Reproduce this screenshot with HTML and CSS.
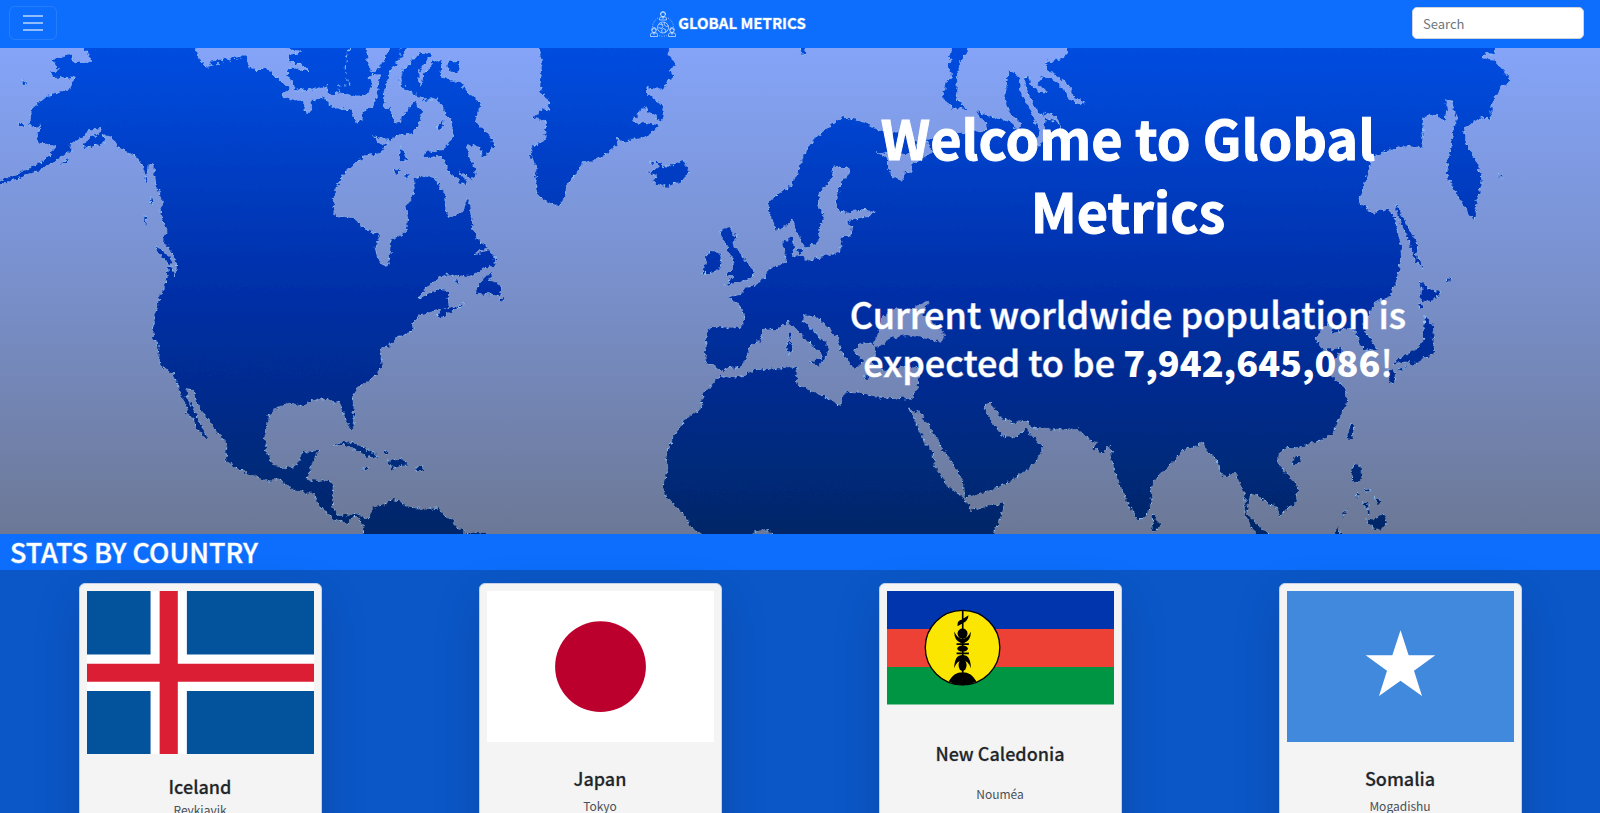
FILE: index.html
```html
<!DOCTYPE html>
<html lang="en">
<head>
<meta charset="utf-8">
<meta name="viewport" content="width=device-width, initial-scale=1">
<title>Global Metrics</title>
<link rel="stylesheet" href="styles.css">
</head>
<body>
<header class="navbar">
  <button class="toggler" type="button" aria-label="Toggle navigation">
    <svg viewBox="0 0 30 30" aria-hidden="true"><path d="M5 8h20M5 15h20M5 22h20"/></svg>
  </button>
  <a class="brand" href="#">
    <svg class="brand-logo" viewBox="0 0 52 52" aria-hidden="true">
      <circle cx="26" cy="33" r="11"/>
      <path d="M18 26l5 1 3 4-3 4-6-2M24 43l-1-5 4-3 5 3-2 5M29 23l-1 4 5 4 4-1M22 24l4 4"/>
      <path class="dots" d="M16 14A22 22 0 0 0 5 32M36 14a22 22 0 0 1 11 18M18 49q8 3 16 0"/>
      <circle cx="26" cy="7" r="4.500"/><path d="M19 18v-3q0-4 7-4t7 4v3zM21 8V5q1-4 5-4t5 4v3M24 12l2 3 2-3"/>
      <circle cx="8" cy="39" r="4"/><path d="M1 51v-4q0-4 7-4t7 4v4zM3 39q0-6 5-6t5 6M6 44l2 3 2-3"/>
      <circle cx="44" cy="39" r="4"/><path d="M37 51v-4q0-4 7-4t7 4v4zM39 39q0-6 5-6t5 6M42 44l2 3 2-3"/>
    </svg>
    <span>GLOBAL METRICS</span>
  </a>
  <form class="search" role="search"><input type="search" placeholder="Search" aria-label="Search"></form>
</header>

<main>
<section class="hero">
  <svg class="map" viewBox="0 48 1600 486" preserveAspectRatio="none" aria-hidden="true">
    <defs>
      <linearGradient id="land" gradientUnits="userSpaceOnUse" x1="0" y1="48" x2="0" y2="534">
        <stop offset="0" stop-color="#004de0"/><stop offset=".5" stop-color="#002fa8"/><stop offset="1" stop-color="#002768"/>
      </linearGradient>
      <linearGradient id="sea" gradientUnits="userSpaceOnUse" x1="0" y1="48" x2="0" y2="534">
        <stop offset="0" stop-color="#85a4f8"/><stop offset=".5" stop-color="#788fca"/><stop offset="1" stop-color="#6c7896"/>
      </linearGradient>
      <filter id="coast" filterUnits="userSpaceOnUse" x="-20" y="28" width="1640" height="526">
        <feTurbulence type="fractalNoise" baseFrequency=".22" numOctaves="2" seed="4"/>
        <feDisplacementMap in="SourceGraphic" scale="6" xChannelSelector="R" yChannelSelector="G"/>
      </filter>
    </defs>
    <rect y="48" width="1600" height="486" fill="url(#sea)"/>
    <g class="land" fill="url(#land)" filter="url(#coast)">
      <!-- Americas -->
      <path d="M86 40V50L90 57 91 61 78 63 72 60 72 54 65 55 52 60 56 65 59 70 50 73 54 78 75 77 69 90 47 96 40 101 32 108 31 116 29 125 37 129 42 123 37 137 37 142 56 146 50 155 40 163 20 173-5 183V186L20 178 37 171 50 164 63 156 72 150 70 145 82 137 92 129 102 128 100 133 90 137 83 145 85 148 97 144 100 146 105 143 103 134 112 137 117 145 128 152 137 157 143 167 146 176 149 165 153 163 155 177 158 190 163 203 160 210 163 222 168 230 163 240 170 249 176 260 177 270 174 276 172 268 167 267 167 281 165 286 160 297 156 310 154 323 153 338 158 345 159 360 163 368 173 373 177 383 182 398 188 408 185 413 193 418 197 428 205 439 207 437 200 423 193 408 188 400 186 388 193 390 198 405 210 422 217 432 227 443 226 460 240 470 260 478 268 481 280 479 293 490 313 493 323 510 335 520 347 523 353 516 358 517 363 524 364 542H485V534L465 532 458 527 445 515 437 508 423 510 407 506 400 502 393 499 383 505 373 508 367 520 358 513 348 515 338 515 332 507 334 485 328 481 307 480 310 470 315 457 319 451 303 452 299 462 295 467 282 468 272 463 265 448 266 430 269 415 277 408 287 403 305 406 312 399 328 399 333 403 339 402 343 410 347 423 351 429 354 425 354 413 352 395 357 388 370 380 382 368 380 348 388 347 397 337 413 332 413 322 420 315 437 310 448 308 448 293 442 289 435 291 417 298 427 287 443 275 473 276 483 268 495 266 495 257 488 250 475 255 477 252 488 247 478 240 473 230 470 210 468 198 463 212 450 217 445 208 445 192 439 187 435 178 420 176 415 178 413 197 405 207 408 217 407 230 398 237 391 240 389 266 382 266 375 252 379 235 367 230 353 218 335 216 333 202 335 190 343 175 355 163 367 155 380 153 388 143 380 144 372 135 383 139 391 141 398 134 407 135 417 130 422 112 414 101 402 117 400 122 393 124 390 107 385 110 384 97 387 80 392 68 400 58V40H392L388 52 378 70 370 72 367 56 366 40 355 40 346 58 344 70 350 84 338 86 340 92 357 97 367 94 373 84 369 78 373 73 380 74 378 90 377 97 373 106 362 112 362 120 357 122 350 110 333 108 325 98 312 100 310 111 306 115 303 102 290 100 282 95 290 88 277 78 268 69 257 70 249 67 247 55 213 62 208 68 200 60 195 48V40Z"/>
      <path d="M288 40V48L303 52 289 55 289 62 302 64 311 72 290 68 286 75 290 80 294 82 294 90 308 90 322 88 327 86 328 95 340 92 338 86 350 86 345 70 347 55 355 40Z"/>
      <path d="M157 246L162 250 170 258 172 266 166 262 158 252ZM143 178L147 176 147 182ZM150 198L153 200 151 205ZM144 215L147 216 145 227ZM58 165L70 157 66 163ZM20 79L26 81 27 86ZM18 123L24 123 23 126ZM209 62L243 55 246 57 212 65Z"/>
      <path d="M400 40H413L400 60ZM420 53L432 53 425 63 418 73 420 87 425 72 433 62 443 60 440 75 448 80 460 82 468 93 480 103 475 122 488 135 495 145 483 158 480 147 467 145 470 157 476 170 472 180 458 170 468 184 461 183 450 173 442 157 423 157 425 152 443 150 453 137 453 123 445 113 438 98 425 100 412 93 400 85 402 72 410 62ZM447 60L460 63 460 72 448 72ZM436 127L443 121 444 127 438 130ZM392 171L400 168 398 173ZM404 176L409 175 406 180ZM400 146L408 160 400 160Z"/>
      <path d="M539 40V48L542 63 540 90 548 100 550 112 543 108 534 118 547 122 545 140 532 147 530 157 538 167 535 173 538 195 545 200 558 207 565 197 567 183 577 173 582 163 600 158 617 145 618 138 622 142 645 137 660 125 633 122 643 107 660 121 664 119 662 105 647 93 647 87 663 90 667 80 675 77 668 70 677 65 668 55 671 40Z"/>
      <path d="M648 162L658 164 658 168 648 173 657 175 653 182 668 187 683 180 690 172 684 161 672 164 663 168 661 162ZM475 293L483 278 492 272 490 280 500 285 500 296 488 294ZM499 298L504 298 502 302ZM437 315L443 309 453 307 467 303 450 312 440 319ZM453 279L462 284 456 283ZM333 445L347 441 360 446 380 457 368 457 357 450 345 445ZM388 460L400 459 409 465 400 466 392 469ZM362 468L369 468 366 471ZM416 467H424V470H416ZM385 451H388V454H385Z"/>
      <!-- Eurasia and Africa -->
      <path d="M1067 40V50L1065 57 1045 63 1047 70 1056 75 1068 84 1075 98 1086 103 1078 104 1068 98 1063 88 1053 80 1041 76 1037 84 1048 92 1040 92 1031 86 1030 76 1024 78 1028 92 1034 105 1040 115 1048 113 1057 116 1062 128 1055 121 1045 119 1044 140 1039 147 1035 141 1040 134 1034 118 1027 105 1020 92 1020 79 1010 70 1007 78 1007 85 1005 100 1010 112 1021 123 1018 129 1008 121 990 117 976 111 979 117 988 124 983 132 972 131 960 133 945 130 935 138 926 140 932 152 922 158 912 163 912 173 905 172 902 180 893 177 888 168 888 158 877 153 890 153 905 154 919 149 912 139 897 133 878 130 865 123 853 119 843 117 825 130 813 140 802 158 800 167 792 185 777 195 768 203 772 220 777 230 785 227 792 218 797 232 805 248 818 242 820 227 825 217 818 207 820 192 833 177 833 167 848 167 850 173 842 183 837 195 837 210 847 213 862 209 875 212 868 217 847 220 852 227 851 236 842 236 840 253 828 255 810 261 800 256 791 257 794 247 792 237 783 243 787 262 767 270 766 276 756 285 745 288 740 295 728 297 738 303 745 315 742 328 712 327 707 330 705 355 707 365 713 365 721 371 727 368 740 367 747 358 748 348 762 338 762 330 777 329 788 322 800 333 810 343 820 352 823 362 829 350 826 343 817 335 803 322 804 314 817 317 838 338 840 350 848 361 855 370 863 362 854 350 860 343 872 343 876 352 872 364 885 370 900 366 920 368 920 377 917 388 912 399 880 398 858 392 845 393 840 406 822 395 800 387 796 380 797 367 753 370 742 377 720 377 703 393 702 407 683 423 675 435 666 453 668 470 663 485 667 498 683 513 688 523 702 535 702 542H745L753 532 765 529 774 535 774 542H993V534L1002 513 1004 503 972 510 964 498 947 485 935 467 933 453 925 443 915 420 907 407 917 414 918 410 933 432 942 448 952 462 962 480 966 497 987 492 1007 483 1020 475 1035 463 1044 447 1033 438 1026 428 1017 437 1002 436 993 423 983 406 990 402 1000 417 1013 423 1027 420 1030 427 1053 430 1078 429 1090 440 1098 443 1093 448 1102 453 1110 445 1115 473 1125 497 1135 517 1140 520 1150 510 1152 482 1173 462 1183 450 1193 447 1203 442 1207 450 1217 460 1222 477 1228 477 1235 472 1239 480 1245 497 1245 517 1257 534V542H1268V534L1253 520 1247 513 1248 500 1253 493 1267 502 1278 508 1279 517 1288 508 1297 502 1297 487 1288 475 1277 462 1280 451 1290 447 1297 448 1315 442 1323 440 1333 433 1340 417 1347 402 1345 388 1332 377 1333 363 1343 348 1323 350 1315 338 1328 323 1333 333 1347 329 1355 331 1363 350 1377 350 1370 338 1362 328 1372 307 1377 301 1390 297 1398 277 1402 250 1397 230 1395 217 1387 209 1373 213 1358 203 1368 175 1370 163 1377 155 1400 146 1422 147 1423 117 1437 115 1443 122 1447 110 1445 100 1450 100 1457 118 1452 130 1452 150 1447 158 1447 175 1457 195 1468 213 1474 220 1477 200 1482 183 1478 165 1472 153 1465 142 1463 128 1473 123 1482 117 1490 119 1493 100 1500 88 1512 80 1500 67 1495 61 1483 58 1483 54 1495 54V40Z"/>
      <path d="M952 40V48L948 67 952 78 945 83 943 98 953 108 967 109 958 100 956 80 960 63 968 48V40ZM800 48H805V54H802ZM720 232L725 229 732 228 731 233 737 237 733 245 740 253 747 263 754 270 752 278 740 282 725 285 733 277 727 275 733 267 733 258 728 253 727 247 723 240ZM702 273L706 263 705 257 712 251 721 253 720 268 710 274ZM787 342H792V353H787ZM788 333H791V339H788ZM808 361L823 359 819 366ZM863 377L870 376 868 379ZM796 248L803 250 800 256Z"/>
      <path d="M1395 205L1400 212 1418 245 1416 254 1423 269 1415 260 1409 240 1398 217ZM1420 280L1428 288 1441 293 1430 302 1420 300 1422 290ZM1418 303L1424 306 1420 309ZM1425 315L1433 327 1434 353 1423 358 1412 367 1409 360 1392 365 1400 358 1412 352 1422 343 1424 330ZM1398 370L1407 366 1402 372ZM1388 370L1395 373 1394 383 1389 382ZM1447 281L1451 277 1449 282ZM1498 174L1503 178 1500 177ZM1350 425L1354 425 1352 440 1347 438ZM1292 460L1298 456 1302 458 1298 464 1293 464ZM1353 465L1360 466 1362 476 1357 484 1351 482ZM1364 487L1371 491 1366 491ZM1356 491L1359 494 1357 499ZM1363 502H1368V507H1363ZM1374 497L1381 502 1378 505ZM1367 509L1371 511 1368 514ZM1365 521L1375 519 1383 514 1387 523 1380 531 1374 527ZM1341 516L1348 508 1344 515ZM1334 536L1338 528 1342 536ZM1153 513L1160 525 1156 532 1152 530Z"/>
    </g>
    <path fill="url(#sea)" filter="url(#coast)" d="M878 333L882 317 897 307 902 313 913 307 929 301 923 313 933 322 945 335 943 342 927 339 907 335 890 338 880 346 873 347Z"/>
  </svg>
  <div class="hero-copy">
    <h1>Welcome to Global Metrics</h1>
    <p>Current worldwide population is expected to be <strong>7,942,645,086</strong>!</p>
  </div>
</section>

<section>
  <h2 class="section-title">STATS BY COUNTRY</h2>
  <div class="countries">
    <article class="card">
      <svg class="flag" viewBox="0 0 25 18" role="img" aria-label="Flag of Iceland"><path fill="#02529c" d="M0 0h25v18H0z"/><path fill="#fff" d="M7 0h4v18H7zM0 7h25v4H0z"/><path fill="#dc1e35" d="M8 0h2v18H8zM0 8h25v2H0z"/></svg>
      <div class="card-body"><h3>Iceland</h3><p>Reykjavik</p></div>
    </article>
    <article class="card">
      <svg class="flag" viewBox="0 0 30 20" role="img" aria-label="Flag of Japan"><path fill="#fff" d="M0 0h30v20H0z"/><circle cx="15" cy="10" r="6" fill="#bc002d"/></svg>
      <div class="card-body"><h3>Japan</h3><p>Tokyo</p></div>
    </article>
    <article class="card">
      <svg class="flag" viewBox="0 0 682 341" role="img" aria-label="Flag of New Caledonia">
        <path fill="#0035ad" d="M0 0h682v114H0z"/><path fill="#ed4135" d="M0 114h682v114H0z"/><path fill="#009543" d="M0 228h682v113H0z"/>
        <circle cx="227" cy="170" r="112" fill="#fae600" stroke="#000" stroke-width="4"/>
        <path d="M225 58h5v200h-5zM212 100q0-10 13-14l20-13q-2 18-16 23l-17 10zM185 272q15-28 42-28t42 28q-42 22-84 0z"/>
        <circle cx="227" cy="128" r="15"/>
        <path d="M202 122q10 22 25 22t25-22q0 28-20 34h-10q-20-6-20-34zM209 157h37v5h-37zM209 185h37v5h-37zM202 232q0-40 25-40t25 40q-7-22-25-24-18 2-25 24z"/>
        <ellipse cx="227" cy="173" rx="16" ry="9"/><ellipse cx="227" cy="222" rx="12" ry="18"/>
      </svg>
      <div class="card-body"><h3>New Caledonia</h3><p>Nouméa</p></div>
    </article>
    <article class="card">
      <svg class="flag" viewBox="0 0 681 454" role="img" aria-label="Flag of Somalia"><path fill="#4189dd" d="M0 0h681v454H0z"/><path fill="#fff" d="M340.500 118l24.500 75h80l-64 46 24 76-64.500-46-64.500 46 24-76-64-46h80z"/></svg>
      <div class="card-body"><h3>Somalia</h3><p>Mogadishu</p></div>
    </article>
  </div>
</section>
</main>
</body>
</html>
```
FILE: styles.css
```css
* { box-sizing: border-box; }

body {
  margin: 0;
  background: #0b57c8;
  color: #212529;
  font-family: "Noto Sans CJK SC", "Noto Sans", sans-serif;
  font-size: 14px;
  line-height: 24px;
}

h1, h2, h3, p { margin: 0; }

.navbar {
  display: flex;
  justify-content: space-between;
  align-items: center;
  height: 48px;
  padding: 0 16px 2px 9px;
  background: #0d6efd;
}

.toggler {
  display: flex;
  justify-content: center;
  align-items: center;
  width: 48px;
  height: 34px;
  padding: 0;
  border: 1px solid rgba(255, 255, 255, .1);
  border-radius: 6px;
  background: transparent;
}

.toggler svg {
  width: 30px;
  height: 30px;
  fill: none;
  stroke: rgba(255, 255, 255, .55);
  stroke-width: 2;
}

.brand {
  display: flex;
  align-items: center;
  gap: 2px;
  color: #fff;
  font-size: 15px;
  font-weight: 700;
  text-decoration: none;
  -webkit-text-stroke: 1px rgba(255, 255, 255, .3);
}

.brand-logo {
  width: 26px;
  height: 26px;
  margin-top: 2px;
  fill: none;
  stroke: rgba(255, 255, 255, .6);
  stroke-width: 2;
}

.brand-logo .dots { stroke-dasharray: 2 3; }

.search { margin-left: 13px; }

.search input {
  display: block;
  width: 172px;
  height: 32px;
  padding: 0 10px;
  border: 1px solid #ced4da;
  border-radius: 5px;
  background: #fff;
  color: #212529;
  font: inherit;
  font-size: 13px;
}

.search input::placeholder { color: #6c757d; opacity: 1; }

.hero {
  position: relative;
  display: grid;
  grid-template-columns: 52% 37%;
  padding: 52px 0 149px;
  overflow: hidden;
}

.map {
  position: absolute;
  inset: 0;
  width: 100%;
  height: 100%;
}

.land path {
  stroke: #8fc4f5;
  stroke-width: 1;
  stroke-dasharray: 2 4;
}

.hero-copy {
  position: relative;
  grid-column: 2;
  display: grid;
  gap: 43px;
  color: #fff;
  text-align: center;
}

.hero h1 {
  font-size: 54px;
  font-weight: 700;
  line-height: 73px;
  -webkit-text-stroke: 1px #fff;
}

.hero p {
  font-size: 36px;
  font-weight: 500;
  line-height: 48px;
  -webkit-text-stroke: 1px rgba(255, 255, 255, .5);
}

.hero strong {
  font-weight: 900;
  -webkit-text-stroke: 0;
}

.section-title {
  padding: 0 10px;
  background: #0d6efd;
  color: #fff;
  font-size: 27px;
  font-weight: 500;
  line-height: 36px;
  -webkit-text-stroke: 1px rgba(255, 255, 255, .4);
}

.countries {
  display: grid;
  grid-template-columns: repeat(4, 1fr);
  justify-items: center;
  padding: 13px 0;
}

.card {
  display: flex;
  flex-direction: column;
  width: 243px;
  padding: 7px;
  border: 1px solid #c3cfe6;
  border-radius: 6px;
  background: #f4f4f4;
  box-shadow: 0 16px 48px rgba(0, 0, 0, .15);
}

.flag { display: block; width: 100%; }

.card-body {
  display: flex;
  flex: 1;
  flex-direction: column;
  justify-content: space-evenly;
  padding: 20px 0 16px;
  text-align: center;
}

.card h3 {
  font-size: 18px;
  font-weight: 500;
  line-height: 24px;
  -webkit-text-stroke: 1px rgba(33, 37, 41, .2);
}

.card p {
  color: #495057;
  font-size: 12px;
}
```
